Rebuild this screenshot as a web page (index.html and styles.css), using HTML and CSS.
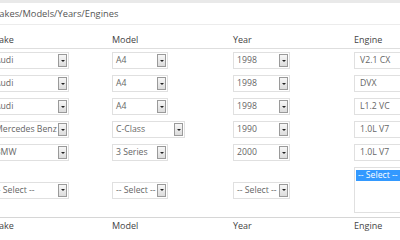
FILE: index.html
```html
<!DOCTYPE html>
<html lang="en">
<head>
  <meta charset="UTF-8" />
  <title>Makes/Models/Years/Engines</title>
  <link rel="stylesheet" href="styles.css">
</head>
<body>
  <div class="topbar"></div>
  <div class="wrap">
    <h2 class="title">Makes/Models/Years/Engines</h2>
    <table class="grid">
      <colgroup><col class="c"><col class="c"><col class="c"><col></colgroup>
      <thead>
        <tr><th>Make</th><th>Model</th><th>Year</th><th>Engine</th></tr>
      </thead>
      <tbody>
        <tr>
          <td><div class="select w-make"><span class="val">Audi</span><span class="btn"></span></div></td>
          <td><div class="select w-model"><span class="val">A4</span><span class="btn"></span></div></td>
          <td><div class="select w-year"><span class="val">1998</span><span class="btn"></span></div></td>
          <td><div class="input">V2.1 CX</div></td>
        </tr>
        <tr>
          <td><div class="select w-make"><span class="val">Audi</span><span class="btn"></span></div></td>
          <td><div class="select w-model"><span class="val">A4</span><span class="btn"></span></div></td>
          <td><div class="select w-year"><span class="val">1998</span><span class="btn"></span></div></td>
          <td><div class="input">DVX</div></td>
        </tr>
        <tr>
          <td><div class="select w-make"><span class="val">Audi</span><span class="btn"></span></div></td>
          <td><div class="select w-model"><span class="val">A4</span><span class="btn"></span></div></td>
          <td><div class="select w-year"><span class="val">1998</span><span class="btn"></span></div></td>
          <td><div class="input">L1.2 VC</div></td>
        </tr>
        <tr>
          <td><div class="select w-make"><span class="val">Mercedes Benz</span><span class="btn"></span></div></td>
          <td><div class="select w-wide"><span class="val">C-Class</span><span class="btn"></span></div></td>
          <td><div class="select w-year"><span class="val">1990</span><span class="btn"></span></div></td>
          <td><div class="input">1.0L V7</div></td>
        </tr>
        <tr>
          <td><div class="select w-make"><span class="val">BMW</span><span class="btn"></span></div></td>
          <td><div class="select w-model"><span class="val">3 Series</span><span class="btn"></span></div></td>
          <td><div class="select w-year"><span class="val">2000</span><span class="btn"></span></div></td>
          <td><div class="input">1.0L V7</div></td>
        </tr>
        <tr class="new-row">
          <td><div class="select w-make"><span class="val">-- Select --</span><span class="btn"></span></div></td>
          <td><div class="select w-model"><span class="val">-- Select --</span><span class="btn"></span></div></td>
          <td><div class="select w-year"><span class="val">-- Select --</span><span class="btn"></span></div></td>
          <td><div class="listbox"><span class="option selected">-- Select --</span></div></td>
        </tr>
      </tbody>
      <tfoot>
        <tr><th>Make</th><th>Model</th><th>Year</th><th>Engine</th></tr>
      </tfoot>
    </table>
  </div>
</body>
</html>
```

FILE: styles.css
```css
body {
  margin: 0;
  font-family: "Open Sans", sans-serif;
  font-size: 8.7px;
  background: white;
  overflow: hidden;
}

.topbar {
  height: 3px;
  background: #e9e9e9;
}

.wrap {
  margin-left: -9px;
  width: 430px;
}

.title {
  margin: 0;
  padding: 4px 0 4px 0;
  font-size: 9.3px;
  font-weight: normal;
  line-height: 13px;
  color: #555;
  border-bottom: 1px solid #ececec;
}

.grid {
  border-collapse: collapse;
  table-layout: fixed;
  width: 430px;
}

.grid col.c {
  width: 121px;
}

.grid th {
  text-align: left;
  font-weight: normal;
  font-size: 9px;
  color: #444;
  line-height: 13px;
  padding: 0;
}

.grid thead th {
  padding: 8px 0 2px;
  border-bottom: 1px solid #dedede;
}

.grid tfoot th {
  padding: 1px 0 0;
  border-top: 1px solid #d6d6d6;
}

.grid td {
  padding: 3px 0;
  vertical-align: middle;
}

.grid .new-row td {
  padding: 3px 0 4px;
}

.select {
  display: flex;
  box-sizing: border-box;
  height: 17px;
  padding: 1px;
  border: 1px solid #e0e0e0;
  background: white;
}

.select .val {
  flex: 1;
  padding-left: 2px;
  line-height: 13px;
  color: #666;
  white-space: nowrap;
  overflow: hidden;
}

.select .btn {
  display: flex;
  align-items: center;
  justify-content: center;
  box-sizing: border-box;
  width: 9px;
  border: 1px solid #9a9a9a;
  background: linear-gradient(#f7f7f7, #dcdcdc);
}

.select .btn::after {
  content: "";
  border-left: 2px solid transparent;
  border-right: 2px solid transparent;
  border-top: 2px solid #222;
}

.w-make { width: 78px; }
.w-model { width: 56px; }
.w-wide { width: 73px; }
.w-year { width: 57px; }

.input {
  box-sizing: border-box;
  width: 70px;
  height: 17px;
  padding-left: 5px;
  line-height: 15px;
  border: 1px solid #e0e0e0;
  color: #666;
}

.listbox {
  box-sizing: border-box;
  width: 70px;
  height: 46px;
  padding: 1px;
  border: 1px solid #e0e0e0;
}

.option {
  display: inline-block;
  padding: 0 2px;
  line-height: 11px;
  color: #666;
}

.option.selected {
  background: #3399ff;
  color: white;
}
```
